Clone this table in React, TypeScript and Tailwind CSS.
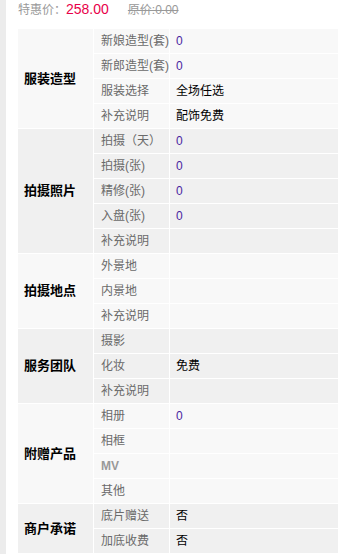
import React from "react";

type Row = { label: string; value?: string; zero?: boolean; mv?: boolean };
type Group = { title: string; rows: Row[] };

const groups: Group[] = [
  {
    title: "服装造型",
    rows: [
      { label: "新娘造型(套)", value: "0", zero: true },
      { label: "新郎造型(套)", value: "0", zero: true },
      { label: "服装选择", value: "全场任选" },
      { label: "补充说明", value: "配饰免费" },
    ],
  },
  {
    title: "拍摄照片",
    rows: [
      { label: "拍摄（天）", value: "0", zero: true },
      { label: "拍摄(张)", value: "0", zero: true },
      { label: "精修(张)", value: "0", zero: true },
      { label: "入盘(张)", value: "0", zero: true },
      { label: "补充说明" },
    ],
  },
  {
    title: "拍摄地点",
    rows: [{ label: "外景地" }, { label: "内景地" }, { label: "补充说明" }],
  },
  {
    title: "服务团队",
    rows: [{ label: "摄影" }, { label: "化妆", value: "免费" }, { label: "补充说明" }],
  },
  {
    title: "附赠产品",
    rows: [
      { label: "相册", value: "0", zero: true },
      { label: "相框" },
      { label: "MV", mv: true },
      { label: "其他" },
    ],
  },
  {
    title: "商户承诺",
    rows: [
      { label: "底片赠送", value: "否" },
      { label: "加底收费", value: "否" },
    ],
  },
];

export default function App() {
  return (
    <div
      className="flex min-h-[554px] bg-white"
      style={{ fontFamily: '"Liberation Sans", "Noto Sans CJK SC", sans-serif' }}
    >
      <div className="w-[6px] shrink-0 bg-[#ececec]" />
      <div className="flex-1 pl-[12px]">
        <div className="flex h-[19px] items-center whitespace-nowrap">
          <span className="text-[12px] text-[#999]">特惠价：</span>
          <span className="text-[14px] text-[#e8004a]">258.00</span>
          <span className="ml-[19px] text-[12px] text-[#999] line-through">原价:0.00</span>
        </div>
        <div className="mt-[10px] flex flex-col gap-px">
          {groups.map((g, gi) => {
            const bg = gi % 2 === 0 ? "bg-[#f8f8f8]" : "bg-[#f0f0f0]";
            return (
              <div key={g.title} className="flex gap-px">
                <div
                  className={`flex w-[75px] shrink-0 items-center pl-[6px] text-[13px] font-bold text-black ${bg}`}
                >
                  {g.title}
                </div>
                <div className="flex flex-1 flex-col gap-px">
                  {g.rows.map((r, ri) => (
                    <div key={ri} className="flex h-[24px] gap-px text-[12px]">
                      <div
                        className={`flex w-[75px] shrink-0 items-center whitespace-nowrap pl-[7px] ${bg} ${
                          r.mv ? "font-semibold text-[#999]" : "text-[#6a6a6a]"
                        }`}
                      >
                        {r.label}
                      </div>
                      <div
                        className={`flex flex-1 items-center pl-[6px] ${bg} ${
                          r.zero ? "text-[#4a1fa0]" : "text-black"
                        }`}
                      >
                        {r.value ?? ""}
                      </div>
                    </div>
                  ))}
                </div>
              </div>
            );
          })}
        </div>
      </div>
    </div>
  );
}
